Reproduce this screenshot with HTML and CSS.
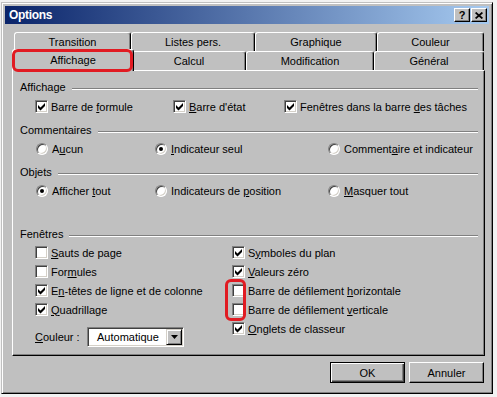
FILE: index.html
```html
<!DOCTYPE html>
<html lang="fr">
<head>
    <meta charset="UTF-8">
    <title>Options</title>
    <link rel="stylesheet" href="styles.css">
</head>
<body>
    <div class="window">
        <div class="titlebar">
            <span class="title">Options</span>
            <div class="caption-btns">
                <span class="cap-btn">?</span>
                <span class="cap-btn">
                    <svg width="8" height="7" viewBox="0 0 8 7"><path d="M0.6 0.5 L7.4 6.5 M7.4 0.5 L0.6 6.5" stroke="#000" stroke-width="1.7"/></svg>
                </span>
            </div>
        </div>

        <div class="sheet">
            <div class="tabs tabs-back">
                <div class="tab tab-transition">Transition</div>
                <div class="tab tab-lists">Listes pers.</div>
                <div class="tab tab-chart">Graphique</div>
                <div class="tab tab-color">Couleur</div>
            </div>
            <div class="tabs tabs-front">
                <div class="tab tab-view selected">Affichage</div>
                <div class="tab tab-calc">Calcul</div>
                <div class="tab tab-edit">Modification</div>
                <div class="tab tab-general">Général</div>
            </div>

            <div class="panel">
                <div class="group">
                    <div class="group-title"><span>Affichage</span><span class="rule"></span></div>
                    <div class="row row-display">
                        <label class="opt"><span class="cb"><svg width="9" height="9" viewBox="0 0 9 9"><polygon points="1,3 3.5,5.5 8,1 8,4 3.5,8.5 1,6"/></svg></span><span>Barre de <u>f</u>ormule</span></label>
                        <label class="opt"><span class="cb"><svg width="9" height="9" viewBox="0 0 9 9"><polygon points="1,3 3.5,5.5 8,1 8,4 3.5,8.5 1,6"/></svg></span><span><u>B</u>arre d'état</span></label>
                        <label class="opt"><span class="cb"><svg width="9" height="9" viewBox="0 0 9 9"><polygon points="1,3 3.5,5.5 8,1 8,4 3.5,8.5 1,6"/></svg></span><span>Fenêtres dans la barre <u>d</u>es tâches</span></label>
                    </div>
                </div>

                <div class="group">
                    <div class="group-title"><span>Commentaires</span><span class="rule"></span></div>
                    <div class="row row-radios">
                        <label class="opt"><span class="radio"></span><span>A<u>u</u>cun</span></label>
                        <label class="opt"><span class="radio on"></span><span><u>I</u>ndicateur seul</span></label>
                        <label class="opt"><span class="radio"></span><span>Comment<u>a</u>ire et indicateur</span></label>
                    </div>
                </div>

                <div class="group">
                    <div class="group-title"><span>Objets</span><span class="rule"></span></div>
                    <div class="row row-radios">
                        <label class="opt"><span class="radio on"></span><span>Afficher <u>t</u>out</span></label>
                        <label class="opt"><span class="radio"></span><span>Indicateurs de <u>p</u>osition</span></label>
                        <label class="opt"><span class="radio"></span><span><u>M</u>asquer tout</span></label>
                    </div>
                </div>

                <div class="group group-windows">
                    <div class="group-title"><span>Fenêtres</span><span class="rule"></span></div>
                    <div class="cols">
                        <div class="col col-left">
                            <label class="row opt"><span class="cb"></span><span><u>S</u>auts de page</span></label>
                            <label class="row opt"><span class="cb"></span><span>For<u>m</u>ules</span></label>
                            <label class="row opt"><span class="cb"><svg width="9" height="9" viewBox="0 0 9 9"><polygon points="1,3 3.5,5.5 8,1 8,4 3.5,8.5 1,6"/></svg></span><span>E<u>n</u>-têtes de ligne et de colonne</span></label>
                            <label class="row opt"><span class="cb"><svg width="9" height="9" viewBox="0 0 9 9"><polygon points="1,3 3.5,5.5 8,1 8,4 3.5,8.5 1,6"/></svg></span><span><u>Q</u>uadrillage</span></label>
                            <div class="color-row">
                                <span class="color-label"><u>C</u>ouleur :</span>
                                <div class="combo">
                                    <span class="combo-text">Automatique</span>
                                    <span class="combo-btn"><svg width="7" height="4" viewBox="0 0 7 4"><polygon points="0,0 7,0 3.5,4"/></svg></span>
                                </div>
                            </div>
                        </div>
                        <div class="col">
                            <label class="row opt"><span class="cb"><svg width="9" height="9" viewBox="0 0 9 9"><polygon points="1,3 3.5,5.5 8,1 8,4 3.5,8.5 1,6"/></svg></span><span>S<u>y</u>mboles du plan</span></label>
                            <label class="row opt"><span class="cb"><svg width="9" height="9" viewBox="0 0 9 9"><polygon points="1,3 3.5,5.5 8,1 8,4 3.5,8.5 1,6"/></svg></span><span><u>V</u>aleurs zéro</span></label>
                            <label class="row opt"><span class="cb"></span><span>Barre de défilement <u>h</u>orizontale</span></label>
                            <label class="row opt"><span class="cb"></span><span>Barre de défilement <u>v</u>erticale</span></label>
                            <label class="row opt"><span class="cb"><svg width="9" height="9" viewBox="0 0 9 9"><polygon points="1,3 3.5,5.5 8,1 8,4 3.5,8.5 1,6"/></svg></span><span><u>O</u>nglets de classeur</span></label>
                        </div>
                    </div>
                </div>
            </div>
        </div>

        <div class="actions">
            <button class="btn default">OK</button>
            <button class="btn">Annuler</button>
        </div>
    </div>

    <!-- annotations -->
    <div class="mark mark-tab"></div>
    <div class="mark mark-scroll"></div>
</body>
</html>
```

FILE: styles.css
```css
* {
    box-sizing: border-box;
}
body {
    margin: 0;
    background-color: #f2f2f2;
    font-family: "Liberation Sans", Arial, sans-serif;
    font-size: 11px;
    color: #000;
}
.window {
    width: 492px;
    height: 392px;
    margin: 2px 0 0 1px;
    padding: 3px;
    background-color: #c0c0c0;
    border: 1px solid;
    border-color: #c0c0c0 #000 #000 #c0c0c0;
    box-shadow: inset 1px 1px #fff, inset -1px -1px #808080;
}
.titlebar {
    height: 18px;
    display: flex;
    align-items: center;
    justify-content: space-between;
    padding: 0 2px 0 4px;
    background: linear-gradient(to right, #0a246a, #a6caf0);
    color: #fff;
}
.title {
    font-weight: bold;
    font-size: 12px;
    letter-spacing: -0.3px;
}
.caption-btns {
    display: flex;
    gap: 1px;
}
.cap-btn {
    width: 16px;
    height: 14px;
    display: flex;
    align-items: center;
    justify-content: center;
    background-color: #c0c0c0;
    border: 1px solid;
    border-color: #fff #000 #000 #fff;
    box-shadow: inset -1px -1px #808080;
    color: #000;
    font-weight: bold;
    font-size: 11px;
}
.sheet {
    margin: 8px 4px 0 7px;
}
.tabs {
    display: flex;
}
.tabs-back {
    padding-left: 2px;
}
.tabs-front {
    margin-top: -2px;
    align-items: flex-end;
    position: relative;
    z-index: 1;
}
.tab {
    height: 19px;
    line-height: 18px;
    text-align: center;
    background-color: #c0c0c0;
    border: 1px solid;
    border-bottom: 0;
    border-color: #fff #000 transparent #fff;
    border-radius: 3px 3px 0 0;
    box-shadow: inset -1px 0 #808080;
}
.tab-transition { width: 117px; }
.tab-lists { width: 124px; }
.tab-chart { width: 122px; }
.tab-color { width: 107px; }
.tab-view { width: 122px; }
.tab-calc { width: 114px; margin-left: -2px; }
.tab-edit { width: 128px; }
.tab-general { width: 110px; }
.tab.selected {
    height: 22px;
    line-height: 21px;
    margin-bottom: -1px;
    position: relative;
    z-index: 1;
}
.panel {
    height: 286px;
    padding-top: 8px;
    background-color: #c0c0c0;
    border: 1px solid;
    border-color: #fff #000 #000 #fff;
    box-shadow: inset -1px -1px #808080;
}
.group + .group {
    margin-top: 6px;
}
.group.group-windows {
    margin-top: 26px;
}
.group-title {
    display: flex;
    height: 16px;
    line-height: 16px;
    padding: 0 6px 0 7px;
}
.group-title .rule {
    flex: 1;
    height: 2px;
    margin: 9px 0 0 6px;
    border-top: 1px solid #808080;
    border-bottom: 1px solid #fff;
}
.group-title + .row,
.group-title + .cols {
    margin-top: 1px;
}
.group-title + .row-display {
    margin-top: 2px;
}
.row {
    display: flex;
    align-items: center;
    height: 19px;
    padding-left: 22px;
}
.opt {
    display: flex;
    align-items: center;
    white-space: nowrap;
}
.row-display .opt:nth-child(1) { width: 138px; }
.row-display .opt:nth-child(2) { width: 111px; }
.row-radios {
    padding-left: 23px;
}
.row-radios .opt:nth-child(1) { width: 119px; }
.row-radios .opt:nth-child(2) { width: 173px; }
.cb {
    width: 13px;
    height: 13px;
    flex: none;
    padding: 1px;
    margin-right: 3px;
    background-color: #fff;
    border: 1px solid;
    border-color: #808080 #fff #fff #808080;
    box-shadow: inset 1px 1px #404040, inset -1px -1px #d4d0c8;
}
.cb svg {
    display: block;
}
.radio {
    width: 12px;
    height: 12px;
    flex: none;
    margin-right: 4px;
    display: flex;
    align-items: center;
    justify-content: center;
    border-radius: 50%;
    background-color: #fff;
    border: 1px solid;
    border-color: #808080 #fff #fff #808080;
    box-shadow: inset 1px 1px #404040, inset -1px -1px #d4d0c8;
}
.radio.on::after {
    content: "";
    width: 4px;
    height: 4px;
    border-radius: 50%;
    background-color: #000;
}
.cols {
    display: flex;
    padding-left: 22px;
}
.cols .row {
    padding-left: 0;
}
.col-left {
    width: 197px;
}
.color-row {
    display: flex;
    align-items: center;
    height: 20px;
    margin-top: 8px;
}
.color-label {
    width: 52px;
}
.combo {
    width: 97px;
    height: 20px;
    display: flex;
    align-items: center;
    padding: 1px;
    background-color: #fff;
    border: 1px solid;
    border-color: #808080 #fff #fff #808080;
    box-shadow: inset 1px 1px #404040, inset -1px -1px #d4d0c8;
}
.combo-text {
    flex: 1;
    padding-left: 8px;
}
.combo-btn {
    width: 16px;
    height: 16px;
    display: flex;
    align-items: center;
    justify-content: center;
    background-color: #c0c0c0;
    border: 1px solid;
    border-color: #d4d0c8 #000 #000 #d4d0c8;
    box-shadow: inset 1px 1px #fff, inset -1px -1px #808080;
}
.actions {
    display: flex;
    justify-content: flex-end;
    gap: 4px;
    margin-top: 6px;
    padding-right: 5px;
}
.btn {
    width: 75px;
    height: 21px;
    padding: 0;
    font: inherit;
    color: #000;
    background-color: #c0c0c0;
    border: 1px solid;
    border-color: #fff #000 #000 #fff;
    box-shadow: inset -1px -1px #808080;
}
.btn.default {
    border-color: #000;
    box-shadow: inset 1px 1px #fff, inset -1px -1px #404040, inset -2px -2px #808080;
}
/* red annotation frames */
.mark {
    position: absolute;
    z-index: 5;
    border: 3px solid #e11b22;
    border-radius: 6px;
}
.mark-tab {
    left: 12px;
    top: 49px;
    width: 121px;
    height: 23px;
}
.mark-scroll {
    left: 225px;
    top: 279px;
    width: 21px;
    height: 42px;
}
```
